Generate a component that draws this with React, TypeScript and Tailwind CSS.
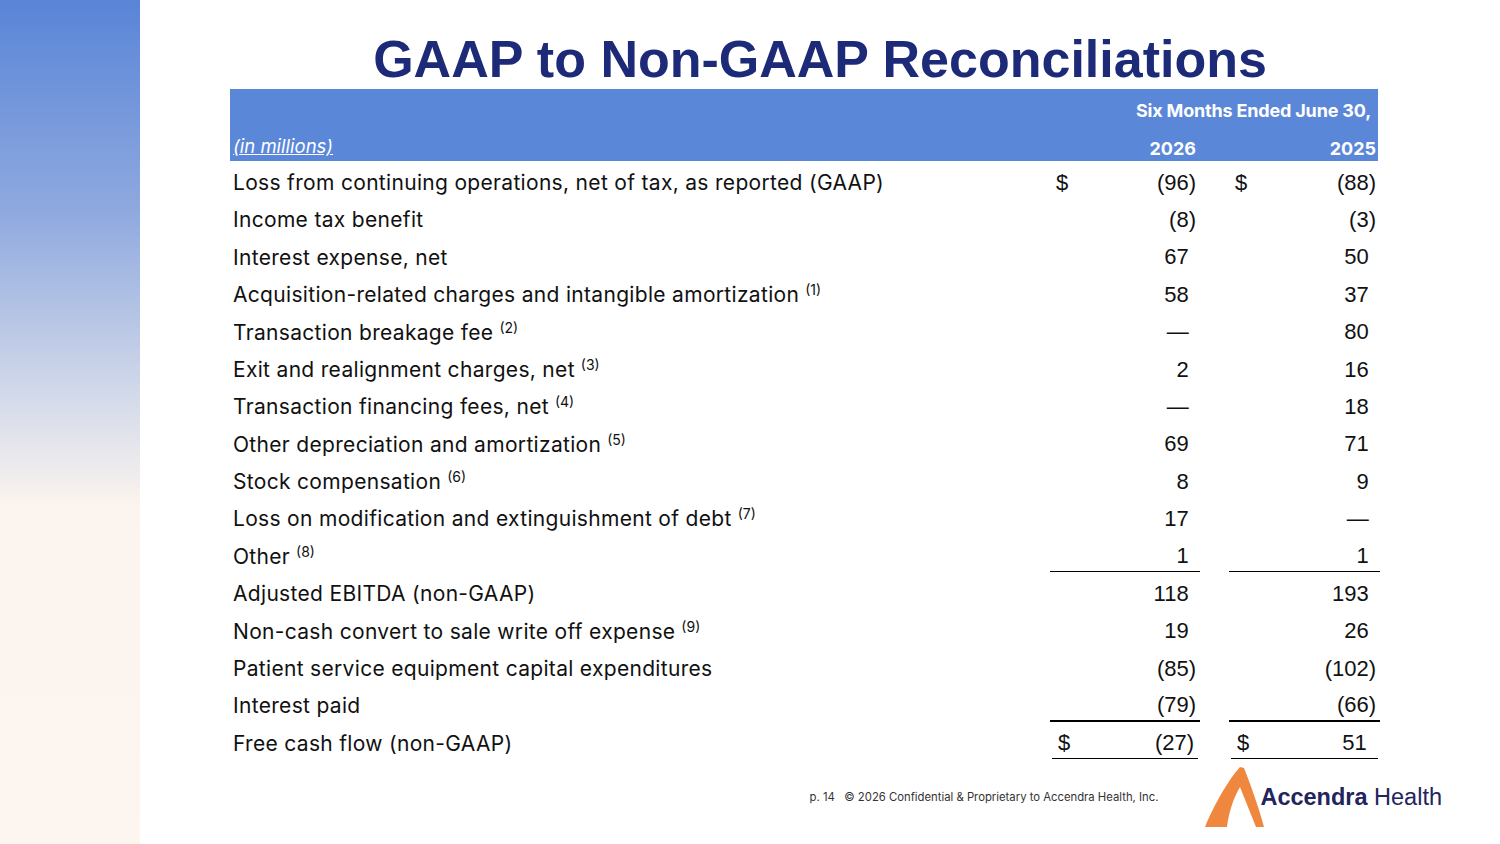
import React from 'react';

type Row = {
  label: string;
  note?: string;
  a: string;
  b: string;
  dollar?: boolean;
  line?: 'thin' | 'thick' | 'total';
};

const rows: Row[] = [
  { label: 'Loss from continuing operations, net of tax, as reported (GAAP)', a: '(96)', b: '(88)', dollar: true },
  { label: 'Income tax benefit', a: '(8)', b: '(3)' },
  { label: 'Interest expense, net', a: '67', b: '50' },
  { label: 'Acquisition-related charges and intangible amortization', note: '(1)', a: '58', b: '37' },
  { label: 'Transaction breakage fee', note: '(2)', a: '—', b: '80' },
  { label: 'Exit and realignment charges, net', note: '(3)', a: '2', b: '16' },
  { label: 'Transaction financing fees, net', note: '(4)', a: '—', b: '18' },
  { label: 'Other depreciation and amortization', note: '(5)', a: '69', b: '71' },
  { label: 'Stock compensation', note: '(6)', a: '8', b: '9' },
  { label: 'Loss on modification and extinguishment of debt', note: '(7)', a: '17', b: '—' },
  { label: 'Other', note: '(8)', a: '1', b: '1', line: 'thin' },
  { label: 'Adjusted EBITDA (non-GAAP)', a: '118', b: '193' },
  { label: 'Non-cash convert to sale write off expense', note: '(9)', a: '19', b: '26' },
  { label: 'Patient service equipment capital expenditures', a: '(85)', b: '(102)' },
  { label: 'Interest paid', a: '(79)', b: '(66)', line: 'thick' },
  { label: 'Free cash flow (non-GAAP)', a: '(27)', b: '51', dollar: true, line: 'total' },
];

const labelFont = "font-['Inter','Open_Sans',sans-serif]";
const numFont = "font-['Liberation_Sans',Arial,sans-serif]";

const Amount = ({ value }: { value: string }) => {
  const paren = value.startsWith('(');
  return (
    <span>
      {value}
      {!paren && <span className="invisible">)</span>}
    </span>
  );
};

const ValueCell = ({ value, dollar, line }: { value: string; dollar?: boolean; line?: Row['line'] }) => {
  const border =
    line === 'thin'
      ? 'border-b-[1.5px] border-black'
      : line === 'thick'
      ? 'border-b-[2.5px] border-black'
      : line === 'total'
      ? 'border-b-[1.5px] border-black mx-[2px]'
      : '';
  return (
    <div className={`flex h-full items-center justify-between pl-[6px] pr-[4px] pt-[5px] ${border}`}>
      <span>{dollar ? '$' : ''}</span>
      <Amount value={value} />
    </div>
  );
};

const Logo = () => (
  <div className="flex items-center">
    <svg width="70" height="64" viewBox="0 0 70 64" className="mr-[-8px]">
      <path
        d="M42 2 C31 14 17 38 7 62 L29 62 C31 46 36 32 42 22 L58 62 L66 62 C60 40 52 18 46 3 Z"
        fill="#f0873f"
      />
    </svg>
    <span className="font-['Liberation_Sans',Arial,sans-serif] text-[23.5px] leading-none text-[#22245e]">
      <span className="font-bold">Accendra</span> Health
    </span>
  </div>
);

export default function App() {
  return (
    <div className="flex h-[844px] w-[1500px] overflow-hidden bg-white">
      <div className="h-full w-[140px] shrink-0 bg-[linear-gradient(to_bottom,#5985d7_0%,#8fa9df_25%,#d6dcea_48%,#fcf4ee_60%,#fdf5ef_100%)]" />
      <div className="flex flex-1 flex-col">
        <h1 className="mt-[33px] text-center font-['Liberation_Sans',Arial,sans-serif] text-[52px] font-bold leading-none text-[#1d2a78]">
          GAAP to Non-GAAP Reconciliations
        </h1>

        <div className="ml-[90px] mt-[4px] w-[1150px]">
          <div className={`grid h-[72px] w-[1148px] grid-cols-[820px_150px_29px_149px] grid-rows-2 bg-[#5b87d9] text-white ${labelFont}`}>
            <div className="col-span-4 flex items-end justify-end pr-[7px] pb-[1px] text-[18px] font-bold tracking-[-0.01em]">
              Six Months Ended June 30,
            </div>
            <div className="flex items-center pl-[3px] pt-[7px] text-[18.5px] italic underline">(in millions)</div>
            <div className="flex items-center justify-end pr-[4px] pt-[11px] text-[18px] font-bold">2026</div>
            <div />
            <div className="flex items-center justify-end pr-[2px] pt-[11px] text-[18px] font-bold">2025</div>
          </div>

          <div className="grid grid-cols-[820px_150px_29px_151px]">
            {rows.map((r) => (
              <React.Fragment key={r.label}>
                <div className={`flex h-[37.4px] items-center pl-[3px] pt-[6px] text-[21px] tracking-[0.015em] text-[#111] ${labelFont}`}>
                  <span>
                    {r.label}
                    {r.note && <sup className="ml-[6px] text-[14px] tracking-normal">{r.note}</sup>}
                  </span>
                </div>
                <div className={`h-[37.4px] text-[22px] text-[#111] ${numFont}`}>
                  <ValueCell value={r.a} dollar={r.dollar} line={r.line} />
                </div>
                <div />
                <div className={`h-[37.4px] text-[22px] text-[#111] ${numFont}`}>
                  <ValueCell value={r.b} dollar={r.dollar} line={r.line} />
                </div>
              </React.Fragment>
            ))}
          </div>
        </div>

        <div className="mt-[6px] flex items-center justify-end pr-[58px]">
          <span className={`mr-[40px] text-[11.3px] text-[#333] ${labelFont}`}>
            p. 14&nbsp;&nbsp;&nbsp;© 2026 Confidential &amp; Proprietary to Accendra Health, Inc.
          </span>
          <Logo />
        </div>
      </div>
    </div>
  );
}
